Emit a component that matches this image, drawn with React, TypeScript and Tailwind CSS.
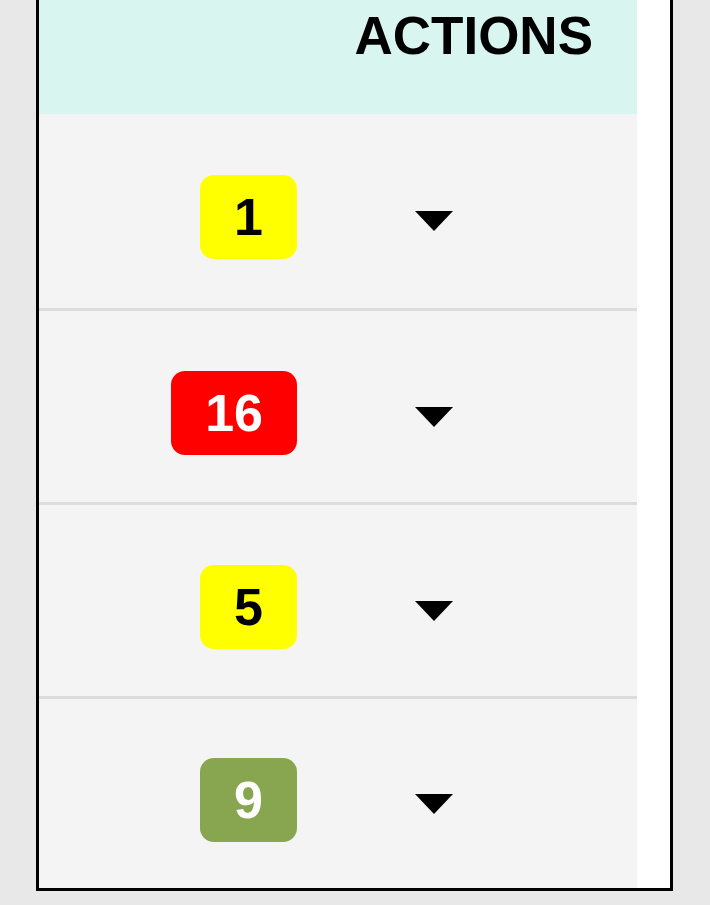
type Badge = { value: string; tone: "yellow" | "red" | "green" };

const rows: Badge[] = [
  { value: "1", tone: "yellow" },
  { value: "16", tone: "red" },
  { value: "5", tone: "yellow" },
  { value: "9", tone: "green" },
];

const toneClass: Record<Badge["tone"], string> = {
  yellow: "bg-[#ffff00] text-black",
  red: "bg-[#ff0000] text-white",
  green: "bg-[#88a650] text-white",
};

function Caret() {
  return (
    <svg width="38" height="20" viewBox="0 0 38 20" aria-hidden="true">
      <polygon points="0,0 38,0 19,20" fill="#000" />
    </svg>
  );
}

export default function App() {
  return (
    <div className="min-h-screen bg-[#e8e8e8] font-['Liberation_Sans',Arial,sans-serif]">
      <div className="ml-[36px] w-[637px] border-x-[3px] border-b-[3px] border-black bg-white">
        <div className="w-[598px]">
          <div className="flex h-[114px] justify-end bg-[#d8f5ef] pr-[44px] pt-[9px]">
            <span className="text-[53px] font-bold leading-none text-black">ACTIONS</span>
          </div>
          {rows.map((row, i) => (
            <div
              key={i}
              className={`grid grid-cols-[258px_274px_1fr] items-center bg-[#f4f4f4] pt-[12px] ${
                i === 0 ? "h-[194px]" : i === rows.length - 1 ? "h-[192px] border-t-[3px] border-[#dcdcdc]" : "h-[194px] border-t-[3px] border-[#dcdcdc]"
              }`}
            >
              <div className="flex justify-end">
                <span
                  className={`flex h-[84px] items-center rounded-[14px] px-[34px] text-[52px] font-bold leading-none ${toneClass[row.tone]}`}
                >
                  {row.value}
                </span>
              </div>
              <div className="flex justify-center pt-[8px]">
                <Caret />
              </div>
              <div />
            </div>
          ))}
        </div>
      </div>
    </div>
  );
}
